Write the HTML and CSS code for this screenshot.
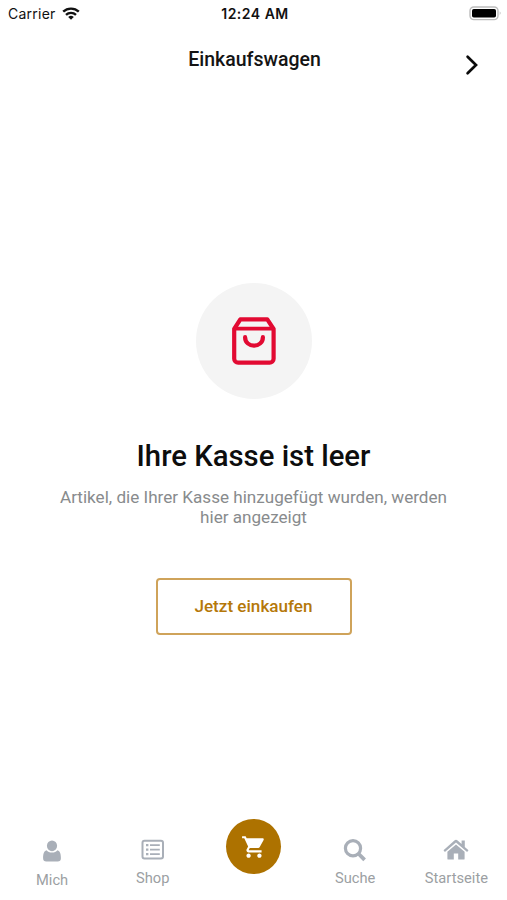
FILE: index.html
```html
<!DOCTYPE html>
<html lang="de">
<head>
<meta charset="utf-8">
<title>Einkaufswagen</title>
<link rel="stylesheet" href="styles.css">
</head>
<body>
<div class="app">
  <div class="status">
    <div class="carrier"><span>Carrier</span>
      <svg class="wifi" width="18" height="13" viewBox="0 0 18 13"><g fill="none" stroke="#111" stroke-width="2.4"><path d="M1.2 4.700a11.300 11.300 0 0 1 15.600 0"/><path d="M4 7.900a7.300 7.300 0 0 1 10 0"/></g><path d="M6.200 9.900a4.200 4.200 0 0 1 5.600 0L9 12.800z" fill="#111"/></svg>
    </div>
    <div class="time">12:24 AM</div>
    <svg class="battery" width="33" height="15" viewBox="0 0 33 15"><rect x="1" y="1" width="28" height="12.600" rx="3.800" fill="#fff" stroke="#bcbcbc" stroke-width="1.400"/><rect x="3" y="3" width="24" height="8.600" rx="1.800" fill="#000"/><path d="M30.800 5.200q1.600 2 0 4z" fill="#999"/></svg>
  </div>
  <header class="header">
    <h1>Einkaufswagen</h1>
    <svg class="next" width="14" height="22" viewBox="0 0 14 22"><path d="M2.600 2.800 11 11l-8.400 8.200" fill="none" stroke="#0b0b0b" stroke-width="2.700" stroke-linecap="round"/></svg>
  </header>
  <main class="empty">
    <div class="disc">
      <svg width="46" height="50" viewBox="0 0 46 50" fill="none" stroke="#e20a32" stroke-width="4.200" stroke-linejoin="round" stroke-linecap="round"><path d="M3.200 13 9.300 3.400h27L42.600 13v29.700a4 4 0 0 1-4 4H7.200a4 4 0 0 1-4-4z"/><path d="M3.800 12.700h38.400" stroke-width="3.800"/><path d="M14.100 21.200c0 11.200 17.800 11.200 17.800 0"/></svg>
    </div>
    <h2>Ihre Kasse ist leer</h2>
    <p>Artikel, die Ihrer Kasse hinzugefügt wurden, werden<br>hier angezeigt</p>
    <button class="shop-now" type="button">Jetzt einkaufen</button>
  </main>
  <nav class="tabs">
    <a class="tab profile"><svg width="18" height="22" viewBox="0 0 18 22"><ellipse cx="9" cy="5.800" rx="5.100" ry="5.400"/><path d="M3.500 10.200C.9 11 .1 14 .1 18.300c0 2.100 1.200 3.300 3.200 3.300h11.400c2 0 3.200-1.200 3.200-3.300 0-4.300-.8-7.300-3.400-8.100C13.200 11.600 11.400 12.600 9 12.600s-4.200-1-5.500-2.400z"/></svg><span>Mich</span></a>
    <a class="tab"><svg width="24" height="22" viewBox="0 0 24 22"><rect x="1.500" y="1.800" width="20.500" height="17.600" rx="2" fill="none" stroke="#a9afb8" stroke-width="2"/><path d="M5 5h2.400v2.200H5zM5 9.500h2.400v2.200H5zM5 14h2.400v2.200H5zM9 5.200h9.800V7H9zM9 9.700h9.800v1.800H9zM9 14.200h9.800V16H9z"/></svg><span>Shop</span></a>
    <a class="tab cart"><span class="cart-disc"><svg width="26" height="26" viewBox="0 0 24 24"><path d="M7 18c-1.100 0-1.990.9-1.990 2S5.900 22 7 22s2-.9 2-2-.9-2-2-2zM1 2v2h2l3.600 7.590-1.350 2.450C4.520 15.370 5.480 17 7 17h12v-2H7.420c-.14 0-.25-.11-.25-.25l.03-.12.9-1.630h7.450c.75 0 1.410-.41 1.750-1.030l3.580-6.490C21.250 4.820 20.760 4 20 4H5.210l-.94-2H1zm16 16c-1.100 0-1.990.9-1.990 2s.89 2 1.990 2 2-.9 2-2-.9-2-2-2z"/></svg></span></a>
    <a class="tab"><svg width="24" height="24" viewBox="0 0 24 24"><g fill="none" stroke="#a9afb8"><circle cx="10" cy="9.200" r="7.600" stroke-width="3.200"/><path d="m15.800 15 5.800 5.800" stroke-width="3.800"/></g></svg><span>Suche</span></a>
    <a class="tab home"><svg width="26" height="22" viewBox="0 0 26 22"><path d="M.5 11.200 11.400 1.500q1.600-1.300 3.200 0L18.600 5V1.400h3.200v6.500l3.700 3.300-1.400 1.700L13 3.400 1.900 12.900z"/><path d="M13 5.400 4.400 12.800v6.900q0 .9.9.9h5.500v-6h4.400v6h5.500q.9 0 .9-.9v-6.900z"/></svg><span>Startseite</span></a>
  </nav>
</div>
</body>
</html>
```

FILE: styles.css
```css
* { box-sizing: border-box; }
body { margin: 0; background: #fff; font-family: Roboto, "Liberation Sans", sans-serif; }
svg { display: block; flex: none; }
.app { height: 900px; display: flex; flex-direction: column; overflow: hidden; }
.status { height: 28px; display: grid; grid-template-columns: 1fr auto 1fr; padding: 0 5px 0 8px; font-family: Inter, sans-serif; color: #111; white-space: nowrap; }
.carrier { display: flex; gap: 6px; font-size: 14px; line-height: 28px; letter-spacing: .25px; }
.wifi { margin-top: 7px; }
.time { font-size: 14px; line-height: 28px; font-weight: 600; letter-spacing: .5px; }
.battery { justify-self: end; margin-top: 6px; }
.header { height: 72px; display: grid; grid-template-columns: 1fr auto 1fr; padding: 0 28px 0 30px; }
h1 { grid-column: 2; margin: 20px 0 0; font-size: 19.500px; line-height: 24px; font-weight: 500; color: #141414; }
.next { justify-self: end; margin-top: 26px; }
.empty { flex: 1; display: flex; flex-direction: column; align-items: center; padding-top: 183px; }
.disc { width: 116px; height: 116px; border-radius: 50%; background: #f4f4f4; display: flex; align-items: center; justify-content: center; }
h2 { margin: 39px 0 0; font-size: 29.300px; line-height: 36px; font-weight: 500; color: #0d0d0d; white-space: nowrap; }
p { margin: 13px 0 0; text-align: center; font-size: 17.100px; line-height: 20px; color: #888b8d; white-space: nowrap; }
.shop-now { width: 196px; height: 57px; margin-top: 51px; padding: 0 0 2px; background: #fff; border: 2px solid #cfa35a; border-radius: 4px; color: #b57809; font: 500 17.100px/24px Roboto, sans-serif; }
.tabs { height: 90px; display: grid; grid-template-columns: repeat(5, 1fr); padding-left: 1px; }
.tab { display: flex; flex-direction: column; align-items: center; padding-top: 29px; color: #9c9fa3; font-size: 14.700px; line-height: 18px; fill: #a9afb8; }
.tab > span:not(.cart-disc) { margin-top: auto; margin-bottom: 13px; }
.profile { padding: 30px 0 0 1px; }
.profile > span:not(.cart-disc) { margin-bottom: 11px; }
.cart { padding-top: 9px; }
.cart-disc { width: 55px; height: 55px; border-radius: 50%; background: #ad7200; fill: #fff; display: flex; align-items: center; justify-content: center; }
```
